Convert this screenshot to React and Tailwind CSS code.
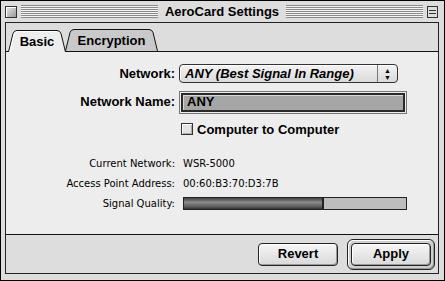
import React from "react";

const stripes =
  "bg-[repeating-linear-gradient(to_bottom,#8a8a8a_0px,#8a8a8a_1px,#f4f4f4_1px,#f4f4f4_2px)]";

function Tab({ width, label, active }) {
  const w = width;
  const d = `M0.5,22 L5,3.5 Q6,0.5 9,0.5 L${w - 9},0.5 Q${w - 6},0.5 ${w - 5},3.5 L${w - 0.5},22`;
  return (
    <div
      className={`relative flex h-[22px] items-center justify-center ${active ? "z-10 -mb-px" : "-ml-px"}`}
      style={{ width: w }}
    >
      <svg className="absolute inset-0" width={w} height="22" viewBox={`0 0 ${w} 22`}>
        <path d={d + " Z"} fill={active ? "#ededed" : "#c9c9c9"} stroke="none" />
        <path d={d} fill="none" stroke="#111" strokeWidth="1" />
        {active && <path d={`M2,22 L6,4.5 Q7,1.6 9.5,1.6 L${w - 9},1.6`} fill="none" stroke="#fff" />}
      </svg>
      <span className="relative pt-[1px] text-[13px] font-bold">{label}</span>
    </div>
  );
}

function Button({ children, primary }) {
  const btn = (
    <div className="flex h-[23px] w-[80px] items-center justify-center rounded-[4px] border border-[#222] bg-[linear-gradient(to_bottom,#f6f6f6,#d9d9d9)] text-[13px] font-bold shadow-[inset_-1px_-1px_0_#999,inset_1px_1px_0_#fff]">
      {children}
    </div>
  );
  if (!primary) return btn;
  return (
    <div className="rounded-[6px] border border-[#222] bg-[#cfcfcf] p-[3px] shadow-[inset_1px_1px_0_#fff,inset_-1px_-1px_0_#999]">
      {btn}
    </div>
  );
}

export default function App() {
  return (
    <div
      className="flex h-[281px] w-[445px] flex-col border border-black bg-[#dddddd] text-black"
      style={{ fontFamily: '"Liberation Sans", Arial, sans-serif' }}
    >
      {/* title bar */}
      <div className="flex h-[21px] items-center gap-[4px] pl-[4px] pr-[6px]">
        <div className="h-[12px] w-[12px] border border-[#333] bg-[linear-gradient(135deg,#e8e8e8,#9a9a9a)] shadow-[inset_1px_1px_0_#fff]" />
        <div className={`h-[13px] flex-1 ${stripes}`} />
        <div className="px-[3px] text-[13px] font-bold leading-none">AeroCard Settings</div>
        <div className={`h-[13px] flex-1 ${stripes}`} />
        <div className="flex h-[12px] w-[11px] flex-col justify-center gap-[2px] border border-[#333] bg-[#ddd] px-[1px]">
          <div className="h-px bg-[#333]" />
          <div className="h-px bg-[#333]" />
        </div>
      </div>

      {/* body */}
      <div className="mb-[6px] ml-[4px] mr-[5px] flex flex-1 flex-col border border-[#222]">
        {/* tab strip */}
        <div className="flex h-[29px] items-end border-b border-[#111] pl-[2px]">
          <Tab width={58} label="Basic" active />
          <Tab width={93} label="Encryption" />
        </div>

        {/* panel */}
        <div className="flex h-[182px] flex-col bg-[#ededed] pt-[12px]">
          <div className="grid grid-cols-[169px_1fr] items-center gap-x-[4px]">
            <div className="text-right text-[13px] font-bold">Network:</div>
            <div className="flex h-[19px] w-[219px] items-center rounded-[4px] border border-[#333] bg-[linear-gradient(to_bottom,#f3f3f3,#dadada)] shadow-[inset_1px_1px_0_#fff]">
              <div className="flex-1 pl-[5px] text-[13px] font-bold italic leading-none">
                ANY (Best Signal In Range)
              </div>
              <div className="flex h-full w-[20px] flex-col items-center justify-center border-l border-[#777] text-[7px] leading-[7px]">
                <span>▲</span>
                <span>▼</span>
              </div>
            </div>

            <div className="mt-[7px] text-right text-[13px] font-bold">Network Name:</div>
            <div className="mt-[7px] w-[228px] border border-[#777] p-px">
              <div className="flex h-[19px] items-center border-2 border-[#2a2a2a] bg-[#a6a6a6] pl-[4px] text-[13px] font-bold shadow-[inset_1px_1px_0_#d8d8d8]">
                ANY
              </div>
            </div>

            <div />
            <div className="mt-[6px] flex items-center gap-[4px] pl-[2px]">
              <div className="h-[12px] w-[12px] border border-[#333] bg-[#e4e4e4] shadow-[inset_1px_1px_0_#fff,inset_-1px_-1px_0_#aaa]" />
              <span className="text-[13px] font-bold">Computer to Computer</span>
            </div>
          </div>

          <div
            className="mt-[18px] grid grid-cols-[169px_1fr] items-center gap-x-[8px] gap-y-[7px] text-[10px]"
            style={{ fontFamily: '"DejaVu Sans", Verdana, sans-serif' }}
          >
            <div className="h-[13px] text-right leading-[13px]">Current Network:</div>
            <div className="h-[13px] leading-[13px]">WSR-5000</div>
            <div className="h-[13px] text-right leading-[13px]">Access Point Address:</div>
            <div className="h-[13px] leading-[13px]">00:60:B3:70:D3:7B</div>
            <div className="h-[13px] text-right leading-[13px]">Signal Quality:</div>
            <div className="flex h-[13px] w-[224px] border border-[#222] bg-[#bdbdbd]">
              <div
                className="h-full border-r-2 border-[#222] bg-[linear-gradient(to_bottom,#444,#8a8a8a_40%,#5a5a5a_80%,#333)]"
                style={{ width: "63%" }}
              />
            </div>
          </div>
        </div>

        {/* button bar */}
        <div className="flex flex-1 items-center justify-end gap-[9px] border-t border-[#111] pr-[3px]">
          <Button>Revert</Button>
          <Button primary>Apply</Button>
        </div>
      </div>
    </div>
  );
}
